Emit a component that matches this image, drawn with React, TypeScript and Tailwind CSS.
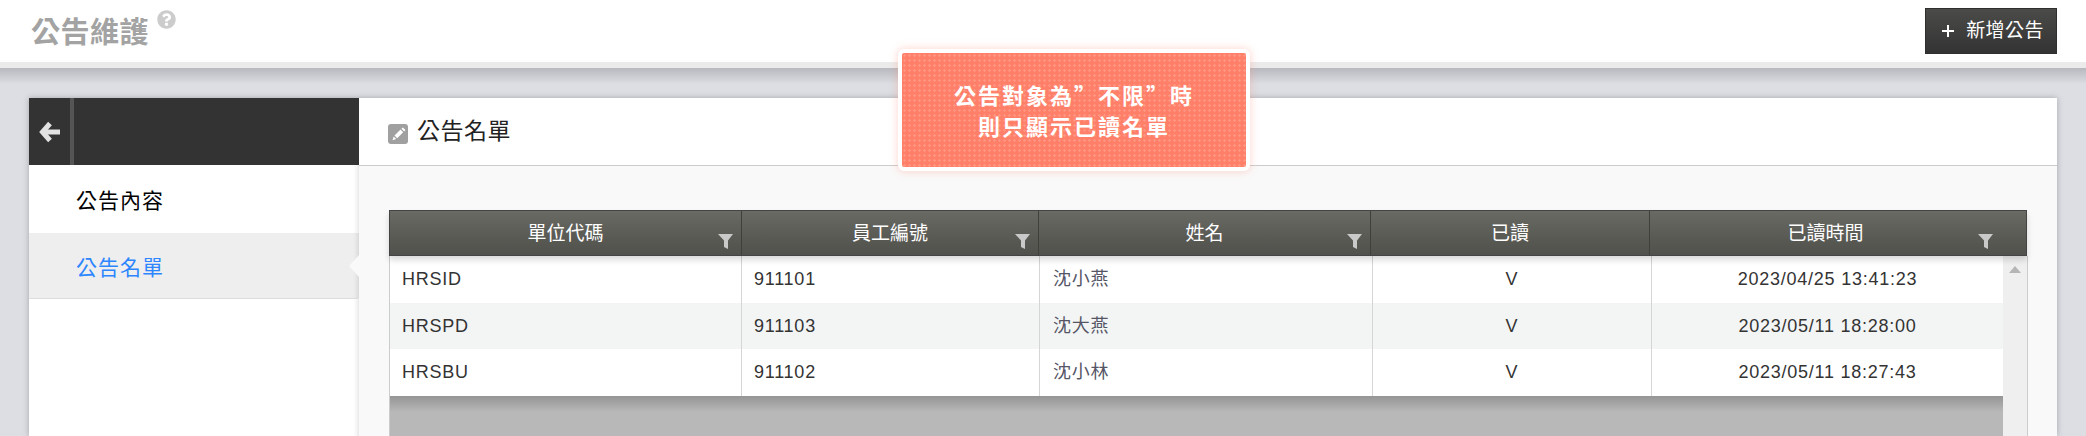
import { FaQuestionCircle } from 'react-icons/fa';

const columns = [
  { title: '單位代碼', width: 'w-[352px]', filter: true },
  { title: '員工編號', width: 'w-[297px]', filter: true },
  { title: '姓名', width: 'w-[332px]', filter: true },
  { title: '已讀', width: 'w-[279px]', filter: false },
  { title: '已讀時間', width: 'flex-1 mr-[25px]', filter: true },
];

const rows = [
  { unit: 'HRSID', no: '911101', name: '沈小燕', time: '2023/04/25 13:41:23' },
  { unit: 'HRSPD', no: '911103', name: '沈大燕', time: '2023/05/11 18:28:00' },
  { unit: 'HRSBU', no: '911102', name: '沈小林', time: '2023/05/11 18:27:43' },
];

function FilterIcon() {
  return (
    <svg viewBox="0 0 15 15" className="absolute right-[8px] bottom-[6px] w-[15px] h-[15px]">
      <path d="M0 0h15L10 6.500V15L6 13V6.500z" fill="#c9c9c9" />
    </svg>
  );
}

function EditIcon() {
  return (
    <svg viewBox="0 0 20 20" className="mt-[4px] w-[20px] h-[20px] shrink-0">
      <rect width="20" height="20" rx="3" fill="#a0a0a0" />
      <path d="M6.500 11.500l6-6 2.700 2.700-6 6zM5.700 12.500l2.500 2.500-3.700 1.200zM13.500 4.700l1.300-1.300 2.700 2.700-1.300 1.300z" fill="#fff" />
    </svg>
  );
}

function BackArrow() {
  return (
    <svg viewBox="0 0 22 24" className="w-[22px] h-[24px]">
      <path d="M11 3.500L3.500 12l7.500 8.500" fill="none" stroke="#e2e2e2" strokeWidth="5" />
      <path d="M5 12h16" fill="none" stroke="#e2e2e2" strokeWidth="5" />
    </svg>
  );
}

export default function App() {
  return (
    <div className="relative h-[436px] w-[2086px] overflow-hidden bg-[#dcdee3] font-['Liberation_Sans','Noto_Sans_CJK_TC',sans-serif]">
      {/* 頁首 */}
      <header className="flex h-[62px] items-center justify-between bg-white pl-[31px] pr-[29px]">
        <div className="flex items-start pt-[3px]">
          <h1 className="text-[29px] leading-[40px] font-bold tracking-[0.5px] text-[#a3a3a3]">公告維護</h1>
          <FaQuestionCircle className="ml-[8px] mt-[-3px] text-[19px] text-[#cccccc]" />
        </div>
        <button className="flex h-[46px] w-[132px] items-center justify-center gap-[12px] border border-[#2f2f2f] bg-gradient-to-b from-[#4b4b49] to-[#333333] pl-[4px] text-[19px] tracking-[0.4px] text-white">
          <svg viewBox="0 0 12 12" className="w-[12px] h-[12px]">
            <path d="M6 0v12M0 6h12" stroke="#fff" strokeWidth="2" />
          </svg>
          <span>新增公告</span>
        </button>
      </header>
      <div className="h-[6px] bg-[#ebebeb]" />

      {/* 主區塊 */}
      <div className="h-[368px] bg-gradient-to-b from-[#b8b9bf] to-[#dcdee3] to-[16px] px-[29px] pt-[30px]">
        <div className="flex h-[338px] shadow-[0_0_6px_rgba(0,0,0,0.25)]">
          <aside className="flex w-[330px] shrink-0 flex-col bg-white">
            <div className="flex h-[67px] items-center bg-[#333333]">
              <div className="flex h-full w-[41px] items-center justify-center">
                <BackArrow />
              </div>
              <div className="h-full w-[4px] bg-[#555555]" />
            </div>
            <div className="flex h-[68px] items-center pl-[47px] pt-[4px] text-[21px] tracking-[1px] text-black shadow-[inset_-6px_0_6px_-6px_rgba(0,0,0,0.18)]">公告內容</div>
            <div className="relative flex h-[66px] items-center border-b border-[#dddddd] bg-[#eeeeee] pl-[47px] pt-[5px] text-[21px] tracking-[1px] text-[#2d86ff] shadow-[inset_-6px_0_6px_-6px_rgba(0,0,0,0.18)]">
              公告名單
              <div className="absolute right-0 top-[22px] h-0 w-0 border-y-[11px] border-r-[10px] border-y-transparent border-r-[#f9f9f9]" />
            </div>
            <div className="flex-1 shadow-[inset_-6px_0_6px_-6px_rgba(0,0,0,0.18)]" />
          </aside>

          <main className="flex min-w-0 flex-1 flex-col bg-[#f9f9f9]">
            <div className="flex h-[68px] shrink-0 items-center gap-[9px] border-b border-[#cccccc] bg-white pl-[29px]">
              <EditIcon />
              <span className="text-[23px] tracking-[0.5px] text-[#222222]">公告名單</span>
            </div>

            <div className="mx-[30px] mt-[44px] flex-1">
              <div className="relative z-10 flex h-[46px] border border-[#444444] bg-gradient-to-b from-[#6a6a64] to-[#50504c] text-[19px] text-white shadow-[0_4px_6px_rgba(0,0,0,0.15)]">
                {columns.map((col, i) => (
                  <div
                    key={col.title}
                    className={`relative flex items-center justify-center pt-[2px] ${col.width} ${i < 4 ? 'border-r border-[#3f3f3c]' : ''}`}
                  >
                    {col.title}
                    {col.filter && <FilterIcon />}
                  </div>
                ))}
              </div>

              <div className="flex h-[180px]">
                <div className="flex min-w-0 flex-1 flex-col border-l border-[#cccccc] bg-[#b8b8b8]">
                  {rows.map((row, i) => (
                    <div
                      key={row.no}
                      className={`flex h-[46.7px] items-center text-[18px] tracking-[0.75px] text-[#333333] ${i === 1 ? 'bg-[#f3f5f5]' : 'bg-white'}`}
                    >
                      <div className="flex h-full w-[352px] items-center border-r border-[#d5d5d5] pl-[12px]">{row.unit}</div>
                      <div className="flex h-full w-[298px] items-center border-r border-[#d5d5d5] pl-[12px]">{row.no}</div>
                      <div className="flex h-full w-[333px] items-center border-r border-[#d5d5d5] pl-[13px] text-[#555566]">{row.name}</div>
                      <div className="flex h-full w-[279px] items-center justify-center border-r border-[#d5d5d5]">V</div>
                      <div className="flex h-full flex-1 items-center justify-center">{row.time}</div>
                    </div>
                  ))}
                  <div className="h-[16px] bg-gradient-to-b from-[#959595] to-[#b8b8b8]" />
                </div>
                <div className="-mr-px flex w-[25px] shrink-0 justify-center border-r border-[#cccccc] bg-[#efefef] pt-[10px]">
                  <div className="h-0 w-0 border-x-[6px] border-b-[7px] border-x-transparent border-b-[#b5b5b5]" />
                </div>
              </div>
            </div>
          </main>
        </div>
      </div>

      {/* 提示框 */}
      <div className="absolute left-[898px] top-[49px] flex h-[122px] w-[352px] flex-col items-center justify-center rounded-[6px] border-[4px] border-white bg-[#ff7f68] bg-[radial-gradient(rgba(255,255,255,0.16)_1px,transparent_1.5px)] bg-[length:5px_5px] font-['Noto_Sans_CJK_TC',sans-serif] text-[22px] leading-[31px] font-bold tracking-[2px] text-white shadow-[0_0_8px_rgba(255,127,104,0.35)]">
        <div>公告對象為”不限”時</div>
        <div>則只顯示已讀名單</div>
      </div>
    </div>
  );
}
